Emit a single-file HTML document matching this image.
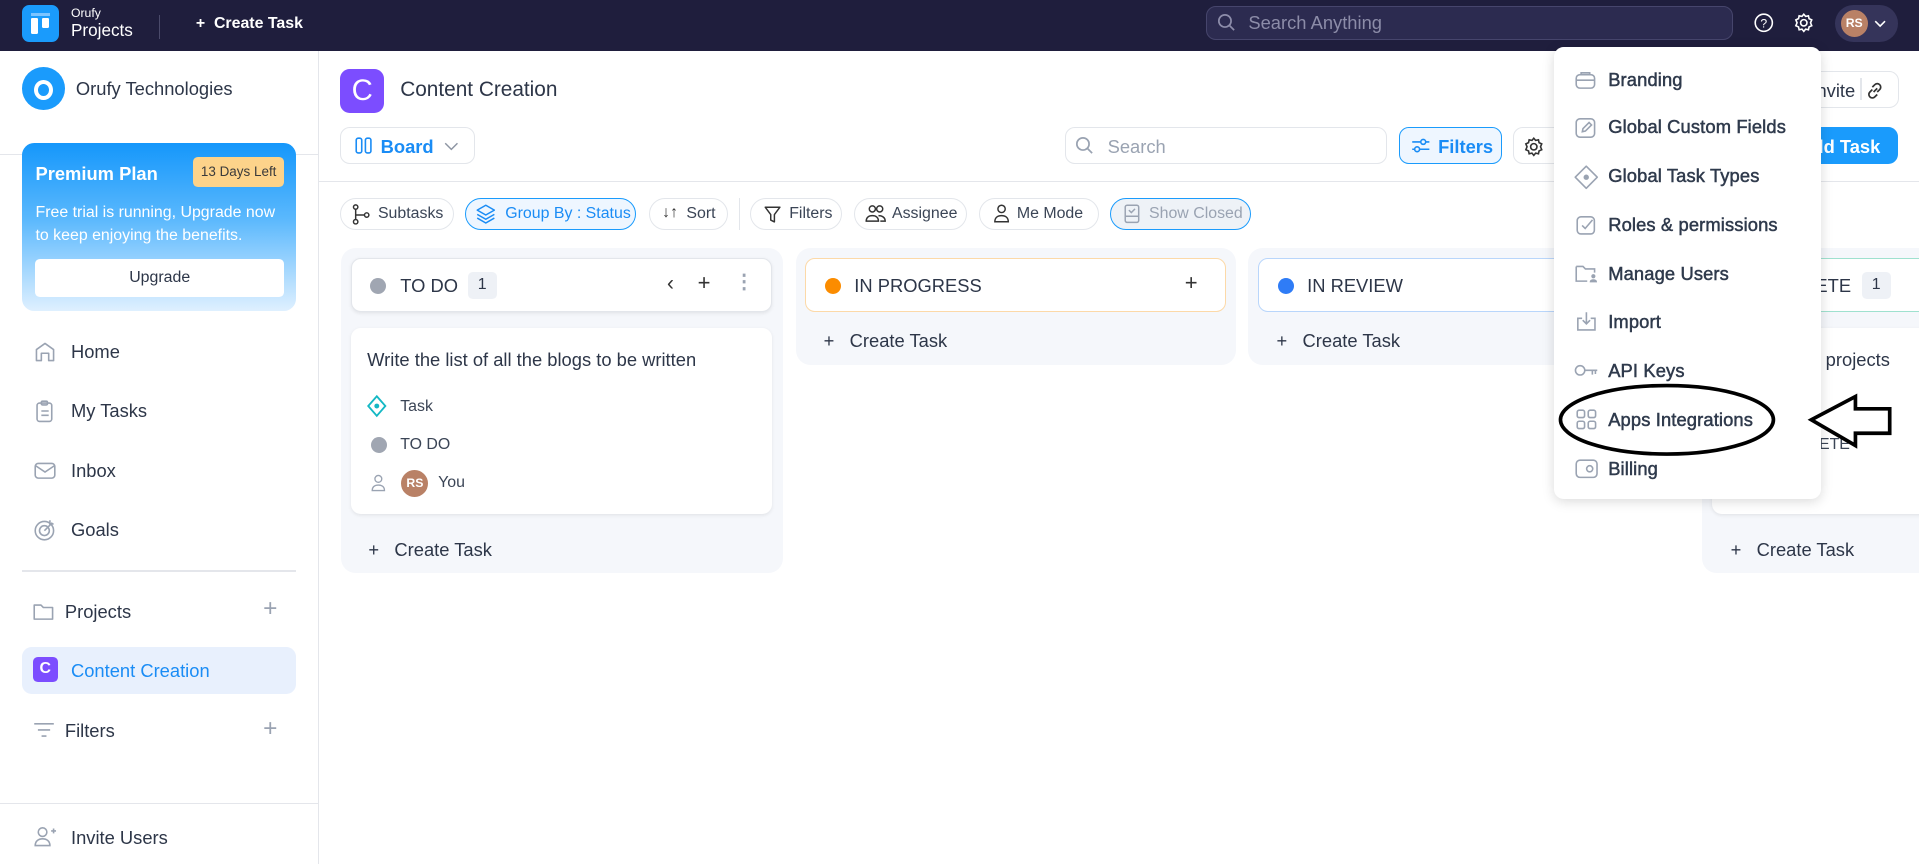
<!DOCTYPE html>
<html><head><meta charset="utf-8">
<style>
html,body{margin:0;padding:0;width:1919px;height:864px;overflow:hidden;background:#fff}
#w{zoom:1.2239;width:1568px;height:706px;position:relative;font-family:"Liberation Sans",sans-serif;color:#2d3648;overflow:hidden}
.a{position:absolute}
.t{position:absolute;white-space:nowrap}
svg{position:absolute;overflow:visible}
.chip{position:absolute;top:162px;height:26px;border:1px solid #e3e6eb;border-radius:14px;box-sizing:border-box;font-size:13px;color:#3b4556;line-height:25px;padding-left:30px}
.col{position:absolute;background:#f5f7fb;border-radius:12px}
.hdr{position:absolute;background:#fff;border-radius:8px;box-sizing:border-box;height:44px}
.nav{position:absolute;font-size:15px;color:#2d3648;left:58px}
.mi{position:absolute;left:1314px;font-size:15px;color:#2f3a4c;-webkit-text-stroke:0.4px #2f3a4c;letter-spacing:.1px}
.ic{stroke:#9aa3b2;fill:none;stroke-width:1.3}
</style></head><body><div id="w">
<!-- top bar -->
<div class="a" style="left:0;top:0;width:1568px;height:42px;background:#1f1e3d"></div>
<div class="a" style="left:18px;top:4px;width:30px;height:30px;background:#1a9bfc;border-radius:6px"></div>
<div class="a" style="left:25px;top:11px;width:16px;height:2px;background:#7cc4ff"></div>
<div class="a" style="left:25px;top:15px;width:6px;height:13px;background:#fff;border-radius:1px"></div>
<div class="a" style="left:34px;top:15px;width:6px;height:8px;background:#fff;border-radius:1px"></div>
<div class="t" style="left:58px;top:5px;font-size:10px;color:#fff">Orufy</div>
<div class="t" style="left:58px;top:16px;font-size:14px;color:#fff">Projects</div>
<div class="a" style="left:130px;top:12px;width:1px;height:20px;background:#4a4a6a"></div>
<div class="t" style="left:160px;top:12px;font-size:13px;color:#fff;font-weight:bold">+&nbsp; Create Task</div>
<div class="a" style="left:985px;top:5px;width:431px;height:28px;background:#2c2b50;border:1px solid #46456c;border-radius:8px;box-sizing:border-box"></div>
<svg style="left:994px;top:11px" width="16" height="16"><circle cx="6.5" cy="6.5" r="5" stroke="#8d8daa" stroke-width="1.4" fill="none"/><path d="M10 10l4 4" stroke="#8d8daa" stroke-width="1.4"/></svg>
<div class="t" style="left:1020px;top:10px;font-size:15px;color:#8c8ca8">Search Anything</div>
<svg style="left:1433px;top:11px" width="16" height="16"><circle cx="8" cy="8" r="7" stroke="#fff" stroke-width="1.3" fill="none"/><text x="8" y="12" font-size="10" fill="#fff" text-anchor="middle" font-family="Liberation Sans">?</text></svg>
<svg style="left:1466px;top:11px" width="16" height="16"><circle cx="8" cy="8" r="2.6" stroke="#fff" stroke-width="1.3" fill="none"/><path d="M8 1l1.5 1.8 2.3-.5.5 2.3 2.2 1-1 2.4 1 2.4-2.2 1-.5 2.3-2.3-.5L8 15l-1.5-1.8-2.3.5-.5-2.3-2.2-1 1-2.4-1-2.4 2.2-1 .5-2.3 2.3.5z" stroke="#fff" stroke-width="1.3" fill="none"/></svg>
<div class="a" style="left:1499px;top:4px;width:52px;height:30px;background:#35345a;border-radius:15px"></div>
<div class="a" style="left:1504px;top:8px;width:22px;height:22px;background:#b98166;border-radius:50%;color:#fff;font-size:10px;font-weight:bold;text-align:center;line-height:22px">RS</div>
<svg style="left:1531px;top:16px" width="10" height="6"><path d="M1 1l4 4 4-4" stroke="#fff" stroke-width="1.3" fill="none"/></svg>

<!-- sidebar -->
<div class="a" style="left:260px;top:42px;width:1px;height:664px;background:#e4e6eb"></div>
<div class="a" style="left:18px;top:55px;width:35px;height:35px;background:#1a9bfc;border-radius:50%"></div>
<div class="a" style="left:28px;top:65px;width:9px;height:10px;border:3.5px solid #fff;border-radius:50%"></div>
<div class="t" style="left:62px;top:64px;font-size:15px;color:#2d3648">Orufy Technologies</div>
<div class="a" style="left:0;top:126px;width:260px;height:1px;background:#e4e6eb"></div>
<div class="a" style="left:18px;top:117px;width:224px;height:137px;border-radius:10px;background:linear-gradient(180deg,#1597fb 0%,#5ab8fd 45%,#dff0ff 100%)"></div>
<div class="t" style="left:29px;top:133px;font-size:15px;color:#fff;font-weight:bold">Premium Plan</div>
<div class="a" style="left:158px;top:128px;width:74px;height:25px;background:#fdd38a;border-radius:4px;font-size:11px;color:#3a3a3a;text-align:center;line-height:25px">13 Days Left</div>
<div class="t" style="left:29px;top:164px;font-size:13px;color:#fff;line-height:19px">Free trial is running, Upgrade now<br>to keep enjoying the benefits.</div>
<div class="a" style="left:29px;top:212px;width:203px;height:31px;background:#fff;border-radius:4px;font-size:13px;text-align:center;line-height:31px;color:#2d3648">Upgrade</div>

<svg style="left:28px;top:279px" width="18" height="18"><path d="M2 16V7l7-5 7 5v9h-4v-6H6v6z" class="ic" stroke-linejoin="round"/></svg>
<div class="nav" style="top:279px">Home</div>
<svg style="left:28px;top:327px" width="18" height="18"><rect x="2.5" y="2.5" width="12" height="15" rx="2" class="ic"/><rect x="6" y="1" width="5" height="3" rx="1" class="ic"/><path d="M6 9h6M6 12.5h6" class="ic"/></svg>
<div class="nav" style="top:327px">My Tasks</div>
<svg style="left:28px;top:377px" width="18" height="18"><rect x="1" y="2" width="16" height="12" rx="2.5" class="ic"/><path d="M1.5 4l7.5 5 7.5-5" class="ic"/></svg>
<div class="nav" style="top:376px">Inbox</div>
<svg style="left:28px;top:424px" width="18" height="18"><circle cx="8.5" cy="9.5" r="7.5" class="ic"/><circle cx="8.5" cy="9.5" r="4" class="ic"/><path d="M8.5 9.5L15 3M13 1v3h3" class="ic"/></svg>
<div class="nav" style="top:424px">Goals</div>
<div class="a" style="left:18px;top:466px;width:224px;height:1px;background:#e4e6eb"></div>
<svg style="left:27px;top:492px" width="18" height="16"><path d="M1 2.5h5.5l2 2H16v9.5H1z" class="ic" stroke-linejoin="round"/></svg>
<div class="nav" style="top:491px;left:53px">Projects</div>
<div class="t" style="left:215px;top:486px;font-size:20px;color:#9aa3b2">+</div>
<div class="a" style="left:18px;top:529px;width:224px;height:38px;background:#e8f0fd;border-radius:8px"></div>
<div class="a" style="left:27px;top:537px;width:20px;height:20px;background:#7c4dff;border-radius:4px;color:#fff;font-size:13px;font-weight:bold;text-align:center;line-height:20px">C</div>
<div class="nav" style="top:539px;color:#1a8cf5">Content Creation</div>
<svg style="left:27px;top:590px" width="18" height="14"><path d="M1 1.5h16M4 6.5h10M7 11.5h4" class="ic" stroke-width="1.5"/></svg>
<div class="nav" style="top:588px;left:53px">Filters</div>
<div class="t" style="left:215px;top:584px;font-size:20px;color:#9aa3b2">+</div>
<div class="a" style="left:0;top:656px;width:260px;height:1px;background:#e4e6eb"></div>
<svg style="left:28px;top:675px" width="20" height="18"><circle cx="7" cy="5" r="3.5" class="ic"/><path d="M1 16c0-4 3-5.5 6-5.5s6 1.5 6 5.5z" class="ic"/><path d="M14 4h4M16 2v4" class="ic"/></svg>
<div class="nav" style="top:676px">Invite Users</div>

<!-- main header -->
<div class="a" style="left:278px;top:56px;width:36px;height:36px;background:#7c4dff;border-radius:8px;color:#fff;font-size:24px;text-align:center;line-height:36px">C</div>
<div class="t" style="left:327px;top:64px;font-size:17px;color:#2d3648">Content Creation</div>
<div class="a" style="left:278px;top:104px;width:110px;height:30px;border:1px solid #e3e6eb;border-radius:8px;box-sizing:border-box"></div>
<svg style="left:290px;top:112px" width="14" height="14"><rect x="1" y="1" width="4.5" height="12" rx="1.5" stroke="#1a8cf5" fill="none" stroke-width="1.3"/><rect x="8.5" y="1" width="4.5" height="12" rx="1.5" stroke="#1a8cf5" fill="none" stroke-width="1.3"/></svg>
<div class="t" style="left:311px;top:111px;font-size:15px;color:#1a8cf5;font-weight:bold">Board</div>
<svg style="left:363px;top:116px" width="12" height="7"><path d="M1 1l5 5 5-5" stroke="#8d95a3" stroke-width="1.2" fill="none"/></svg>
<div class="a" style="left:870px;top:104px;width:263px;height:30px;border:1px solid #e3e6eb;border-radius:8px;box-sizing:border-box"></div>
<svg style="left:878px;top:111px" width="16" height="16"><circle cx="6.5" cy="6.5" r="5" stroke="#9aa3b2" stroke-width="1.4" fill="none"/><path d="M10 10l4 4" stroke="#9aa3b2" stroke-width="1.4"/></svg>
<div class="t" style="left:905px;top:111px;font-size:15px;color:#9aa3b2">Search</div>
<div class="a" style="left:1143px;top:104px;width:84px;height:30px;border:1px solid #1a9bfc;background:#eef6ff;border-radius:8px;box-sizing:border-box"></div>
<svg style="left:1153px;top:112px" width="16" height="14"><path d="M1 4h14M1 10h14" stroke="#1a8cf5" stroke-width="1.3"/><circle cx="10" cy="4" r="2" fill="#eef6ff" stroke="#1a8cf5" stroke-width="1.3"/><circle cx="5" cy="10" r="2" fill="#eef6ff" stroke="#1a8cf5" stroke-width="1.3"/></svg>
<div class="t" style="left:1175px;top:111px;font-size:15px;color:#1a8cf5;font-weight:bold">Filters</div>
<div class="a" style="left:1236px;top:104px;width:60px;height:30px;border:1px solid #e3e6eb;border-radius:8px;box-sizing:border-box"></div>
<svg style="left:1245px;top:112px" width="16" height="16"><circle cx="8" cy="8" r="2.6" stroke="#333" stroke-width="1.3" fill="none"/><path d="M8 1l1.5 1.8 2.3-.5.5 2.3 2.2 1-1 2.4 1 2.4-2.2 1-.5 2.3-2.3-.5L8 15l-1.5-1.8-2.3.5-.5-2.3-2.2-1 1-2.4-1-2.4 2.2-1 .5-2.3 2.3.5z" stroke="#333" stroke-width="1.3" fill="none"/></svg>
<div class="a" style="left:1440px;top:58px;width:112px;height:30px;border:1px solid #e3e6eb;border-radius:8px;box-sizing:border-box"></div>
<div class="t" style="left:1480px;top:65px;font-size:15px;color:#2d3648">Invite</div>
<div class="a" style="left:1520px;top:64px;width:1px;height:18px;background:#e3e6eb"></div>
<svg style="left:1524px;top:66px" width="16" height="16"><path d="M7 9l3-3M6 5l2-2a2.8 2.8 0 014 4l-2 2M10 11l-2 2a2.8 2.8 0 01-4-4l2-2" stroke="#333" stroke-width="1.4" fill="none"/></svg>
<div class="a" style="left:1440px;top:104px;width:111px;height:30px;background:#1a9bfc;border-radius:8px"></div>
<div class="t" style="left:1470px;top:111px;font-size:15px;color:#fff;font-weight:bold">Add Task</div>
<div class="a" style="left:261px;top:148px;width:1307px;height:1px;background:#e4e6eb"></div>

<!-- chips -->
<div class="chip" style="left:278px;width:93px">Subtasks</div>
<svg style="left:288px;top:167px" width="16" height="17"><circle cx="3" cy="2.5" r="1.8" stroke="#333" fill="none" stroke-width="1.2"/><circle cx="3" cy="14.5" r="1.8" stroke="#333" fill="none" stroke-width="1.2"/><circle cx="12" cy="9" r="1.8" stroke="#333" fill="none" stroke-width="1.2"/><path d="M3 4.3v8.4M3 9h7" stroke="#333" stroke-width="1.2"/></svg>
<div class="chip" style="left:380px;width:140px;border-color:#1a9bfc;background:#eef6ff;color:#1a8cf5;padding-left:32px">Group By : Status</div>
<svg style="left:389px;top:167px" width="16" height="16"><path d="M8 1l7 4-7 4-7-4z M1 8.5l7 4 7-4M1 11.5l7 4 7-4" stroke="#1a8cf5" fill="none" stroke-width="1.2" stroke-linejoin="round"/></svg>
<div class="chip" style="left:530px;width:65px">Sort</div>
<div class="t" style="left:541px;top:167px;font-size:13px;color:#333">↓↑</div>
<div class="a" style="left:604px;top:162px;width:1px;height:26px;background:#e3e6eb"></div>
<div class="chip" style="left:613px;width:75px;padding-left:31px">Filters</div>
<svg style="left:624px;top:168px" width="14" height="15"><path d="M1 1h12L8.5 7v6l-3-1.5V7z" stroke="#333" fill="none" stroke-width="1.2" stroke-linejoin="round"/></svg>
<div class="chip" style="left:698px;width:92px">Assignee</div>
<svg style="left:707px;top:167px" width="18" height="15"><circle cx="6" cy="4" r="2.5" stroke="#333" fill="none" stroke-width="1.2"/><circle cx="12" cy="4" r="2.5" stroke="#333" fill="none" stroke-width="1.2"/><path d="M1 14c0-3 2-4.5 5-4.5s5 1.5 5 4.5zM11 9.5c3 0 5.5 1.5 5.5 4.5h-4" stroke="#333" fill="none" stroke-width="1.2"/></svg>
<div class="chip" style="left:800px;width:98px">Me Mode</div>
<svg style="left:811px;top:167px" width="14" height="16"><circle cx="7" cy="4" r="3" stroke="#333" fill="none" stroke-width="1.2"/><path d="M1.5 14.5c0-3.5 2.5-5 5.5-5s5.5 1.5 5.5 5z" stroke="#333" fill="none" stroke-width="1.2"/></svg>
<div class="chip" style="left:907px;width:115px;border-color:#1a9bfc;background:#eef2f7;color:#9aa3b2;padding-left:31px">Show Closed</div>
<svg style="left:918px;top:167px" width="13" height="16"><rect x="1" y="1" width="11" height="14" rx="1.5" stroke="#9aa3b2" fill="none" stroke-width="1.2"/><path d="M1 10h11M4 5l2 2 3-3" stroke="#9aa3b2" fill="none" stroke-width="1.2"/></svg>

<!-- column 1 -->
<div class="col" style="left:279px;top:203px;width:361px;height:265px"></div>
<div class="hdr" style="left:287px;top:211px;width:344px;border:1px solid #e3e6eb;box-shadow:0 1px 3px rgba(0,0,0,.08)"></div>
<div class="a" style="left:302px;top:227px;width:13px;height:13px;background:#a0a6b2;border-radius:50%"></div>
<div class="t" style="left:327px;top:225px;font-size:15px;color:#2d3648">TO DO</div>
<div class="a" style="left:382px;top:222px;width:24px;height:22px;background:#eef1f6;border-radius:4px;font-size:13px;text-align:center;line-height:22px">1</div>
<div class="t" style="left:545px;top:222px;font-size:17px;color:#333">‹</div>
<div class="t" style="left:570px;top:221px;font-size:18px;color:#333">+</div>
<div class="t" style="left:600px;top:221px;font-size:16px;color:#9aa3b2;font-weight:bold">⋮</div>
<div class="a" style="left:287px;top:268px;width:344px;height:152px;background:#fff;border-radius:8px;box-shadow:0 1px 3px rgba(0,0,0,.08)"></div>
<div class="t" style="left:300px;top:285px;font-size:15px;color:#2d3648">Write the list of all the blogs to be written</div>
<svg style="left:300px;top:323px" width="16" height="18"><path d="M8 1l7 8-7 8-7-8z" stroke="#14b8c4" fill="none" stroke-width="1.5"/><circle cx="8" cy="9" r="2" fill="#14b8c4"/></svg>
<div class="t" style="left:327px;top:325px;font-size:13px;color:#3b4556">Task</div>
<div class="a" style="left:303px;top:357px;width:13px;height:13px;background:#a0a6b2;border-radius:50%"></div>
<div class="t" style="left:327px;top:356px;font-size:13px;color:#3b4556">TO DO</div>
<svg style="left:303px;top:387px" width="12" height="15"><circle cx="6" cy="4" r="2.8" stroke="#9aa3b2" fill="none" stroke-width="1.1"/><path d="M1 13.5c0-3 2-4.5 5-4.5s5 1.5 5 4.5z" stroke="#9aa3b2" fill="none" stroke-width="1.1"/></svg>
<div class="a" style="left:328px;top:384px;width:22px;height:22px;background:#b98166;border-radius:50%;color:#fff;font-size:10px;font-weight:bold;text-align:center;line-height:22px">RS</div>
<div class="t" style="left:358px;top:387px;font-size:13px;color:#3b4556">You</div>
<div class="t" style="left:301px;top:440px;font-size:15px;color:#2d3648">+&nbsp;&nbsp; Create Task</div>

<!-- column 2 -->
<div class="col" style="left:650px;top:203px;width:360px;height:95px"></div>
<div class="hdr" style="left:658px;top:211px;width:344px;border:1px solid #fcd9a8"></div>
<div class="a" style="left:674px;top:227px;width:13px;height:13px;background:#fb8c00;border-radius:50%"></div>
<div class="t" style="left:698px;top:225px;font-size:15px;color:#2d3648">IN PROGRESS</div>
<div class="t" style="left:968px;top:221px;font-size:18px;color:#333">+</div>
<div class="t" style="left:673px;top:270px;font-size:15px;color:#2d3648">+&nbsp;&nbsp; Create Task</div>

<!-- column 3 -->
<div class="col" style="left:1020px;top:203px;width:360px;height:95px"></div>
<div class="hdr" style="left:1028px;top:211px;width:344px;border:1px solid #b9d6fb"></div>
<div class="a" style="left:1044px;top:227px;width:13px;height:13px;background:#2f7cf6;border-radius:50%"></div>
<div class="t" style="left:1068px;top:225px;font-size:15px;color:#2d3648">IN REVIEW</div>
<div class="t" style="left:1043px;top:270px;font-size:15px;color:#2d3648">+&nbsp;&nbsp; Create Task</div>

<!-- column 4 -->
<div class="col" style="left:1391px;top:203px;width:200px;height:265px"></div>
<div class="hdr" style="left:1399px;top:211px;width:200px;border:1px solid #9fe1cf"></div>
<div class="t" style="left:1430px;top:225px;font-size:15px;color:#2d3648">COMPLETE</div>
<div class="a" style="left:1521px;top:222px;width:24px;height:22px;background:#eef1f6;border-radius:4px;font-size:13px;text-align:center;line-height:22px">1</div>
<div class="a" style="left:1399px;top:268px;width:200px;height:152px;background:#fff;border-radius:8px;box-shadow:0 1px 3px rgba(0,0,0,.08)"></div>
<div class="t" style="left:1412px;top:285px;font-size:15px;color:#2d3648">Working on projects</div>
<div class="t" style="left:1440px;top:356px;font-size:13px;color:#3b4556">COMPLETE</div>
<div class="t" style="left:1460px;top:387px;font-size:13px;color:#3b4556">You</div>
<div class="t" style="left:1414px;top:440px;font-size:15px;color:#2d3648">+&nbsp;&nbsp; Create Task</div>

<!-- dropdown -->
<div class="a" style="left:1270px;top:38px;width:218px;height:370px;background:#fff;border-radius:8px;box-shadow:0 2px 10px rgba(0,0,0,.15)"></div>
<svg style="left:1287px;top:58px" width="18" height="16"><rect x="1" y="3" width="15" height="11" rx="3" class="ic"/><path d="M1 7.5h15M5 3V1.5h7V3" class="ic"/></svg>
<div class="mi" style="top:56px">Branding</div>
<svg style="left:1287px;top:96px" width="18" height="18"><rect x="1" y="1.5" width="15" height="15" rx="3" class="ic"/><path d="M6 12l.5-2.5 5-5 2 2-5 5z" class="ic"/></svg>
<div class="mi" style="top:95px">Global Custom Fields</div>
<svg style="left:1286px;top:135px" width="20" height="20"><path d="M10 1l9 9-9 9-9-9z" class="ic" stroke-linejoin="round"/><circle cx="10" cy="10" r="2.2" fill="#9aa3b2"/></svg>
<div class="mi" style="top:135px">Global Task Types</div>
<svg style="left:1288px;top:176px" width="17" height="17"><rect x="1" y="1.5" width="14" height="14" rx="3" class="ic"/><path d="M5 8.5l2.5 2.5 6-7" class="ic"/></svg>
<div class="mi" style="top:175px">Roles &amp; permissions</div>
<svg style="left:1287px;top:216px" width="20" height="16"><path d="M1 2h5.5l2 2H16v3M1 2v12h9" class="ic"/><circle cx="15" cy="10" r="1.7" fill="#9aa3b2"/><path d="M12 15c0-2 1.5-2.5 3-2.5s3 .5 3 2.5z" fill="#9aa3b2"/></svg>
<div class="mi" style="top:215px">Manage Users</div>
<svg style="left:1288px;top:254px" width="17" height="17"><path d="M5 6h-3.5v9.5h14V6H12M8.5 1v9M5.5 7.5l3 3 3-3" class="ic"/></svg>
<div class="mi" style="top:254px">Import</div>
<svg style="left:1286px;top:297px" width="20" height="12"><circle cx="5" cy="6" r="3.8" class="ic"/><path d="M8.8 6H19M15 6v3.5M17.5 6v3" class="ic"/></svg>
<div class="mi" style="top:294px">API Keys</div>
<svg style="left:1288px;top:334px" width="17" height="17"><rect x="1" y="1" width="6" height="6" rx="1.5" class="ic"/><rect x="10" y="1" width="6" height="6" rx="1.5" class="ic"/><rect x="1" y="10" width="6" height="6" rx="1.5" class="ic"/><rect x="10" y="10" width="6" height="6" rx="1.5" class="ic"/></svg>
<div class="mi" style="top:334px">Apps Integrations</div>
<svg style="left:1287px;top:375px" width="19" height="16"><rect x="1" y="1" width="17" height="14" rx="3" class="ic"/><circle cx="12" cy="8" r="2.5" class="ic"/></svg>
<div class="mi" style="top:374px">Billing</div>

<!-- annotations -->
<svg style="left:0;top:0" width="1568" height="706"><ellipse cx="1362" cy="343" rx="87" ry="28" fill="none" stroke="#000" stroke-width="3"/><path d="M1480 343L1516 324v10h28v20h-28v10z" fill="#fff" stroke="#000" stroke-width="3" stroke-linejoin="miter"/></svg>
</div></body></html>
